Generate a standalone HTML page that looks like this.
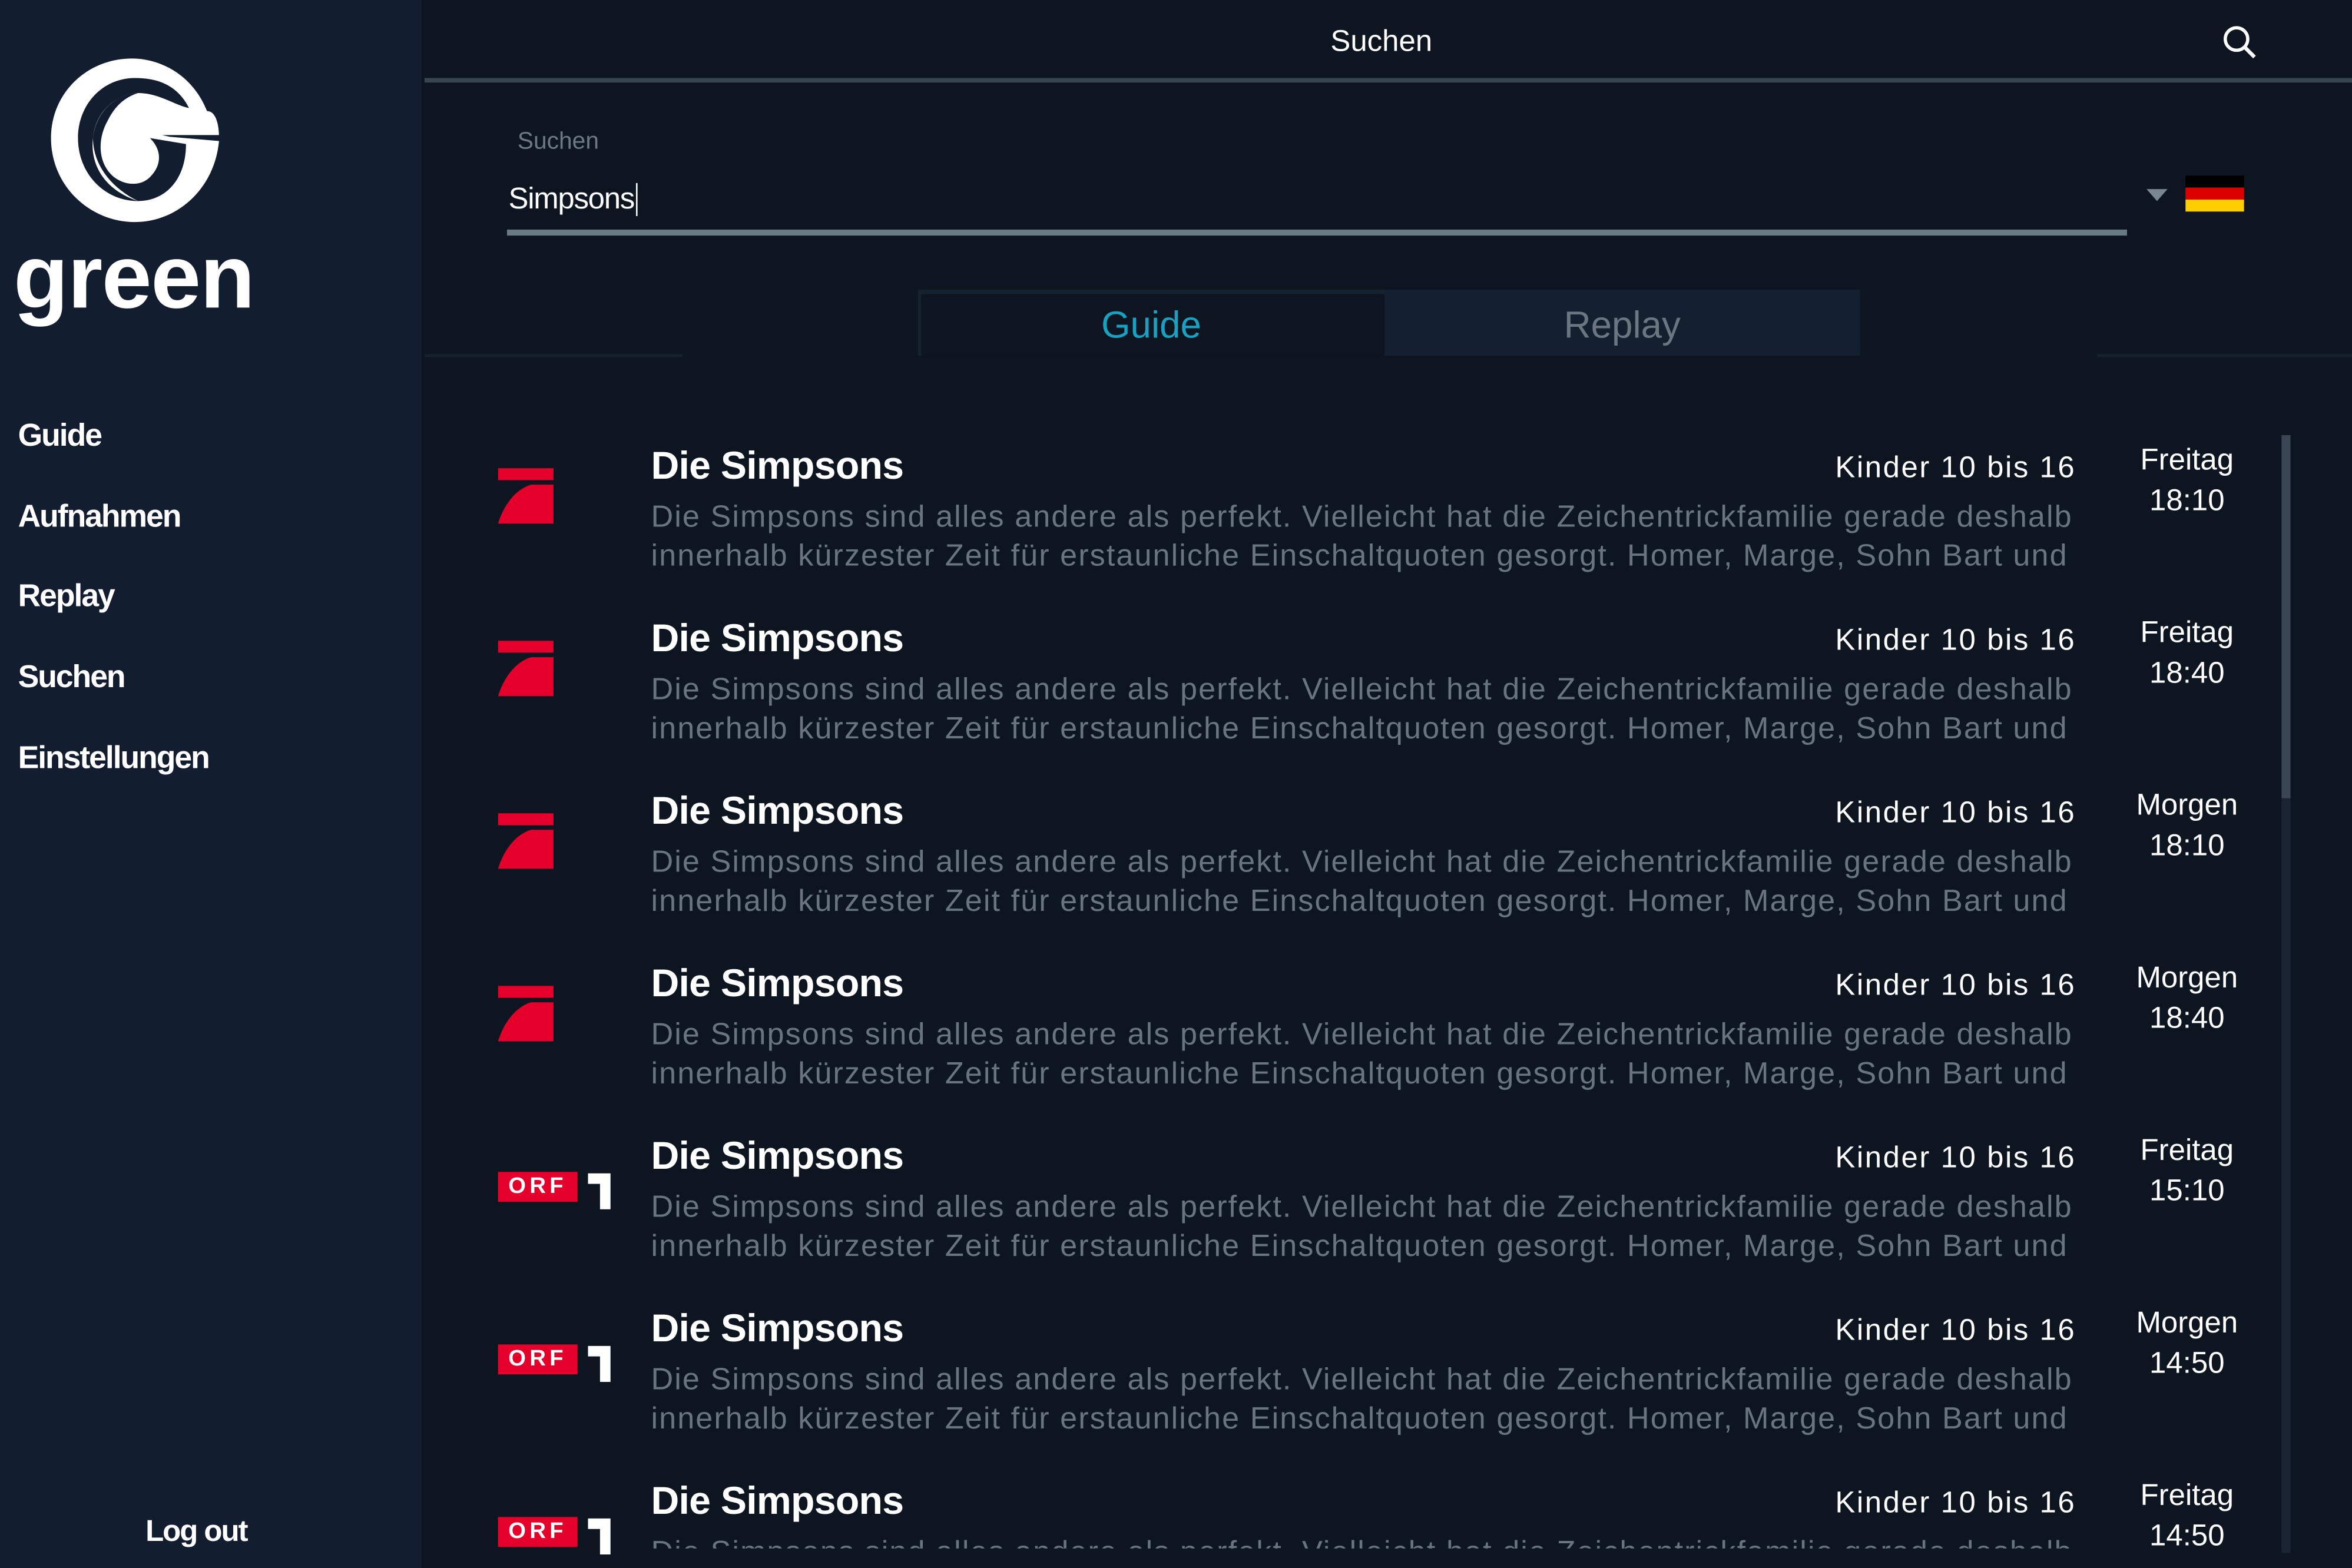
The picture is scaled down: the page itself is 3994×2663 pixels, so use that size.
<!DOCTYPE html>
<html><head><meta charset="utf-8"><style>
html,body{margin:0;padding:0;background:#0d1520;overflow:hidden;width:3994px;height:2663px;}
#w{position:absolute;left:0;top:0;width:1568px;height:1045px;overflow:hidden;transform:scale(2.5472,2.5483);transform-origin:0 0;font-family:"Liberation Sans",sans-serif;background:#0d1520;}
.sb{position:absolute;left:0;top:0;width:281px;height:1045px;background:#121e2f;}
.nav{position:absolute;left:12px;color:#fff;font-weight:bold;font-size:21px;letter-spacing:-0.8px;}
.abs{position:absolute;}
.row{position:absolute;left:0;width:1568px;height:115px;}
.t{position:absolute;left:434px;top:-32px;color:#fff;font-weight:bold;font-size:26px;letter-spacing:-0.3px;}
.d{position:absolute;left:434px;top:5px;width:948px;color:#687480;font-size:20.5px;line-height:26px;white-space:nowrap;overflow:hidden;height:52px;letter-spacing:0.8px;}
.k{position:absolute;left:1210px;top:-26px;width:174px;text-align:right;color:#fff;font-size:20px;letter-spacing:1px;}
.dt{position:absolute;left:1408px;top:-33px;width:100px;text-align:center;color:#fff;font-size:20px;line-height:27px;}
</style></head><body><div id="w">
<div class="sb">
<svg class="abs" style="left:28px;top:34px" width="125" height="120" viewBox="0 0 125 120">
<path d="M110 40 C100 15 78 5 60 5 C30 5 6 28 6 58 C6 90 32 114 62 114 C90 114 115 92 118 60 L72 56 C86 70 88 86 70 104 C96 92 102 78 98 60 L80 56 L118 56 C118 56 118 40 110 40 Z" fill="#fff"/>
<path d="M98 38 C90 22 76 18 62 18 C40 18 24 36 24 58 C24 82 42 100 64 100 C40 92 32 74 34 58 C36 38 52 28 64 28 C78 28 88 36 98 38 Z" fill="#121e2f"/>
<path d="M64 28 C50 28 36 40 34 58 C34 74 44 90 64 100 C82 100 96 86 96 62 L72 58 C80 66 80 76 72 84 C66 90 56 90 48 84 C38 76 36 60 44 46 C50 34 58 30 64 28Z" fill="#121e2f"/>
</svg>
<div class="abs" style="left:9px;top:150px;color:#fff;font-weight:bold;font-size:60px;letter-spacing:-0.6px;">green</div>
<div class="nav" style="top:279px">Guide</div>
<div class="nav" style="top:333px">Aufnahmen</div>
<div class="nav" style="top:386px">Replay</div>
<div class="nav" style="top:440px">Suchen</div>
<div class="nav" style="top:494px">Einstellungen</div>
<div class="nav" style="top:1010px;left:97px;font-size:20px">Log out</div>
</div>
<div class="abs" style="left:887px;top:17px;color:#fff;font-size:20px">Suchen</div>
<svg class="abs" style="left:1480px;top:16px" width="26" height="26" viewBox="0 0 26 26"><circle cx="11" cy="10" r="7.5" stroke="#fff" stroke-width="2.2" fill="none"/><path d="M16.5 15.5 L23 22" stroke="#fff" stroke-width="2.5"/></svg>
<div class="abs" style="left:283px;top:52px;width:1285px;height:3px;background:#3a4552"></div>
<div class="abs" style="left:345px;top:86px;color:#6d7884;font-size:16px">Suchen</div>
<div class="abs" style="left:339px;top:122px;color:#fff;font-size:20px;letter-spacing:-0.5px">Simpsons<span style="border-left:1.5px solid #fff;margin-left:1px"></span></div>
<div class="abs" style="left:338px;top:153px;width:1080px;height:4px;background:#6a7a85"></div>
<div class="abs" style="left:1431px;top:126px;width:0;height:0;border-left:7px solid transparent;border-right:7px solid transparent;border-top:8px solid #7a8690"></div>
<div class="abs" style="left:1457px;top:117px;width:39px;height:8px;background:#000"></div>
<div class="abs" style="left:1457px;top:125px;width:39px;height:8px;background:#dd0000"></div>
<div class="abs" style="left:1457px;top:133px;width:39px;height:8px;background:#ffce00"></div>
<div class="abs" style="left:283px;top:236px;width:172px;height:2px;background:#16212e"></div>
<div class="abs" style="left:1398px;top:236px;width:170px;height:2px;background:#16212e"></div>
<div class="abs" style="left:612px;top:193px;width:311px;height:44px;background:#0d1520;border-top:3px solid #172230;border-left:2px solid #172230;box-sizing:border-box"></div>
<div class="abs" style="left:923px;top:193px;width:317px;height:44px;background:#122030"></div>
<div class="abs" style="left:612px;top:203px;width:311px;text-align:center;color:#1aa0c0;font-size:25px">Guide</div>
<div class="abs" style="left:923px;top:203px;width:317px;text-align:center;color:#6c7680;font-size:25px">Replay</div>
<div class="abs" style="left:1521px;top:290px;width:6px;height:745px;background:#1a2533"></div>
<div class="abs" style="left:1521px;top:290px;width:6px;height:242px;background:#3a4654"></div>

<div id="rows"></div>
<script>
var items=[["p","Freitag","18:10"],["p","Freitag","18:40"],["p","Morgen","18:10"],["p","Morgen","18:40"],["o","Freitag","15:10"],["o","Morgen","14:50"],["o","Freitag","14:50"]];
var h="";
items.forEach(function(it,i){
var y=327+i*115;
var logo = it[0]=="p"
? '<svg class="abs" style="left:332px;top:-15px" width="38" height="38" viewBox="0 0 38 38"><rect x="0" y="0" width="37" height="8" fill="#e4002b"/><path d="M37 11 L37 37 L0 37 C4 24 12 14 22 11 Z" fill="#e4002b"/></svg>'
: '<div class="abs" style="left:332px;top:-6px;width:53px;height:20px;background:#e4002b;color:#fff;font-weight:bold;font-size:15px;letter-spacing:2.5px;text-align:center;line-height:20px">ORF</div><svg class="abs" style="left:390px;top:-7px" width="18" height="26" viewBox="0 0 18 26"><path d="M2 2 L17 2 L17 26 L10 26 L10 9 L2 9 Z" fill="#fff"/></svg>';
h+='<div class="row" style="top:'+y+'px">'+logo+'<div class="t">Die Simpsons</div><div class="k">Kinder 10 bis 16</div><div class="dt">'+it[1]+'<br>'+it[2]+'</div><div class="d"'+(i==6?' style="height:10px"':'')+'>Die Simpsons sind alles andere als perfekt. Vielleicht hat die Zeichentrickfamilie gerade deshalb<br>innerhalb kürzester Zeit für erstaunliche Einschaltquoten gesorgt. Homer, Marge, Sohn Bart und</div></div>';
});
document.getElementById("rows").innerHTML=h;
</script>
</div></body></html>
